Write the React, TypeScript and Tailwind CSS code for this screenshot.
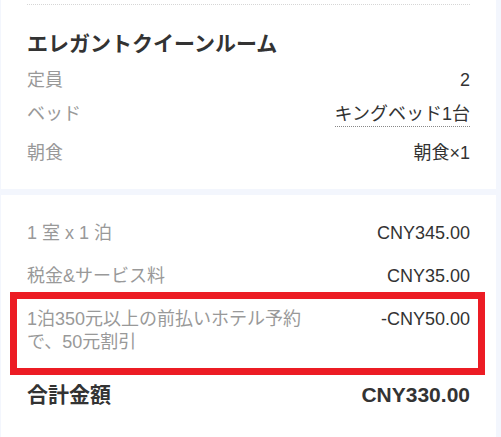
const font = { fontFamily: '"Liberation Sans", "Noto Sans CJK JP", sans-serif' };

const roomRows = [
  { label: "定員", value: "2" },
  { label: "ベッド", value: "キングベッド1台", dotted: true },
  { label: "朝食", value: "朝食×1" },
];

export default function App() {
  return (
    <div className="min-h-screen bg-[#f3f6fd] pl-px pr-[5px] flex flex-col" style={font}>
      <div className="bg-white px-[26px] pt-1 pb-6">
        <div className="border-t border-dotted border-[#d6d6d6]" />
        <h2 className="mt-[25px] text-[21px] leading-7 font-bold text-[#333]">エレガントクイーンルーム</h2>
        <div className="mt-[10px] flex justify-between text-[18px] leading-6">
          <span className="text-[#999]">{roomRows[0].label}</span>
          <span className="text-[#333]">{roomRows[0].value}</span>
        </div>
        <div className="mt-[10px] flex justify-between text-[18px] leading-6">
          <span className="text-[#999]">{roomRows[1].label}</span>
          <span className="text-[#333] border-b border-dotted border-[#888]">{roomRows[1].value}</span>
        </div>
        <div className="mt-[14px] flex justify-between text-[18px] leading-6">
          <span className="text-[#999]">{roomRows[2].label}</span>
          <span className="text-[#333]">{roomRows[2].value}</span>
        </div>
      </div>

      <div className="mt-[6px] flex-1 bg-white px-[26px] pt-[26px] pb-6">
        <div className="flex justify-between text-[18px] leading-6">
          <span className="text-[#999]">1 室 x 1 泊</span>
          <span className="text-[#333]">CNY345.00</span>
        </div>
        <div className="mt-[19px] flex justify-between text-[18px] leading-6">
          <span className="text-[#999]">税金&amp;サービス料</span>
          <span className="text-[#333]">CNY35.00</span>
        </div>
        <div className="relative mt-5 flex justify-between items-start text-[18px] leading-[23px]">
          <span className="text-[#999] max-w-[285px]">1泊350元以上の前払いホテル予約で、50元割引</span>
          <span className="text-[#333]">-CNY50.00</span>
          <div className="absolute -left-[17px] -right-[15px] -top-4 -bottom-[21px] border-[7px] border-[#ec1c24]" />
        </div>
        <div className="mt-[27px] flex justify-between text-[21px] leading-7 font-bold text-[#333]">
          <span>合計金額</span>
          <span>CNY330.00</span>
        </div>
      </div>
    </div>
  );
}
